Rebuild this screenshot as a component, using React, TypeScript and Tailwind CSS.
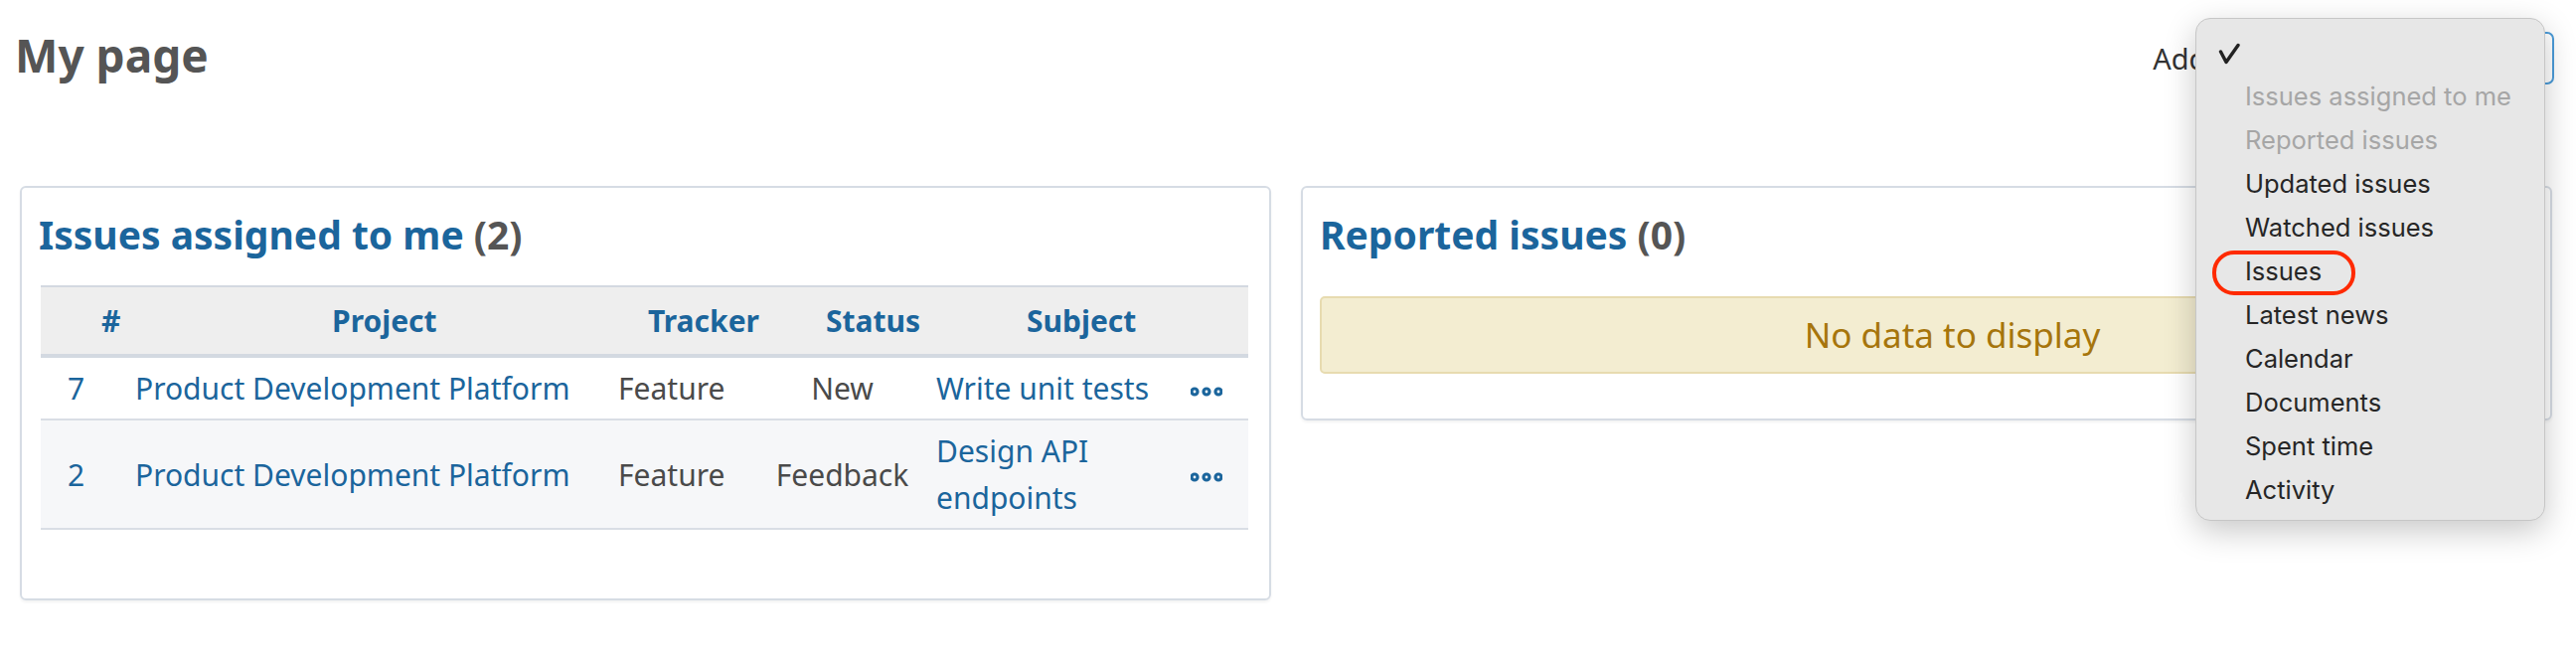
import React from "react";

function Dots() {
  return (
    <svg width="32" height="10" viewBox="0 0 32 10" className="inline-block align-middle">
      <circle cx="4" cy="5" r="3" fill="none" stroke="#1b659c" strokeWidth="3.2" />
      <circle cx="16" cy="5" r="3" fill="none" stroke="#1b659c" strokeWidth="3.2" />
      <circle cx="28" cy="5" r="3" fill="none" stroke="#1b659c" strokeWidth="3.2" />
    </svg>
  );
}

const menuItems: { label: string; disabled?: boolean }[] = [
  { label: "Issues assigned to me", disabled: true },
  { label: "Reported issues", disabled: true },
  { label: "Updated issues" },
  { label: "Watched issues" },
  { label: "Issues" },
  { label: "Latest news" },
  { label: "Calendar" },
  { label: "Documents" },
  { label: "Spent time" },
  { label: "Activity" },
];

export default function App() {
  return (
    <div className="relative w-[2592px] h-[672px] overflow-hidden bg-white font-['Noto_Sans',sans-serif]">
      {/* top row */}
      <div className="flex items-start justify-between pl-[20px] pr-[22px] pt-[25px]">
        <h2 className="-ml-[5px] text-[46px] leading-[60px] font-bold text-[#555555]">My page</h2>
        <div className="mt-[7px] flex items-center gap-[12px]">
          <span className="text-[29px] leading-[40px] text-[#333333]">Add block:</span>
          <div className="h-[53px] w-[250px] rounded-[7px] border-2 border-[#4b9bd8] bg-white" />
        </div>
      </div>

      {/* boxes */}
      <div className="mt-[102px] flex items-start gap-[30px] pl-[20px] pr-[24px]">
        <div className="flex-1 rounded-[6px] border-2 border-[#d6dce4] px-[17px] pt-[21px] shadow-[0_2px_3px_rgba(0,0,0,0.05)]">
          <h3 className="text-[39px] leading-[52px] font-bold text-[#1b659c]">
            Issues assigned to me <span className="text-[#555555]">(2)</span>
          </h3>
          <div className="mt-[25px] mb-[69px] ml-[2px] mr-[4px]">
            <table className="w-full table-fixed border-collapse text-[30px] leading-[47px]">
              <colgroup>
                <col className="w-[80px]" />
                <col className="w-[491px]" />
                <col className="w-[158px]" />
                <col className="w-[155px]" />
                <col className="w-[255px]" />
                <col className="w-[76px]" />
              </colgroup>
              <thead>
                <tr className="bg-[#eeeeee] text-left font-bold text-[#1b659c]">
                  <th className="border-t-2 border-b-4 border-[#d3d9e1] py-[10px] pl-[61px] whitespace-nowrap">#</th>
                  <th className="border-t-2 border-b-4 border-[#d3d9e1] py-[10px] pl-[213px] whitespace-nowrap">Project</th>
                  <th className="border-t-2 border-b-4 border-[#d3d9e1] py-[10px] pl-[40px] whitespace-nowrap">Tracker</th>
                  <th className="border-t-2 border-b-4 border-[#d3d9e1] py-[10px] pl-[61px] whitespace-nowrap">Status</th>
                  <th className="border-t-2 border-b-4 border-[#d3d9e1] py-[10px] pl-[108px] whitespace-nowrap">Subject</th>
                  <th className="border-t-2 border-b-4 border-[#d3d9e1] py-[10px]"></th>
                </tr>
              </thead>
              <tbody>
                <tr className="bg-white">
                  <td className="border-b-2 border-[#d9dee5] py-[7px] pl-[27px] text-[#1b659c]">7</td>
                  <td className="border-b-2 border-[#d9dee5] py-[7px] pl-[15px] text-[#1b659c] whitespace-nowrap">Product Development Platform</td>
                  <td className="border-b-2 border-[#d9dee5] py-[7px] pl-[10px] text-[#4a4a4a]">Feature</td>
                  <td className="border-b-2 border-[#d9dee5] py-[7px] text-center text-[#4a4a4a]">New</td>
                  <td className="border-b-2 border-[#d9dee5] py-[7px] pl-[17px] pr-[6px] text-[#1b659c] whitespace-nowrap">Write unit tests</td>
                  <td className="border-b-2 border-[#d9dee5] py-[7px] pl-[18px]"><Dots /></td>
                </tr>
                <tr className="bg-[#f6f7f9]">
                  <td className="border-b-2 border-[#d9dee5] py-[7px] pl-[27px] text-[#1b659c]">2</td>
                  <td className="border-b-2 border-[#d9dee5] py-[7px] pl-[15px] text-[#1b659c] whitespace-nowrap">Product Development Platform</td>
                  <td className="border-b-2 border-[#d9dee5] py-[7px] pl-[10px] text-[#4a4a4a]">Feature</td>
                  <td className="border-b-2 border-[#d9dee5] py-[7px] text-center text-[#4a4a4a]">Feedback</td>
                  <td className="border-b-2 border-[#d9dee5] py-[7px] pl-[17px] pr-[6px] text-[#1b659c]">Design API<br />endpoints</td>
                  <td className="border-b-2 border-[#d9dee5] py-[7px] pl-[18px]"><Dots /></td>
                </tr>
              </tbody>
            </table>
          </div>
        </div>

        <div className="flex-1 rounded-[6px] border-2 border-[#d6dce4] px-[17px] pt-[21px] shadow-[0_2px_3px_rgba(0,0,0,0.05)]">
          <h3 className="text-[39px] leading-[52px] font-bold text-[#1b659c]">
            Reported issues <span className="text-[#555555]">(0)</span>
          </h3>
          <div className="mt-[36px] mb-[45px] flex h-[78px] items-center justify-center rounded-[5px] border-2 border-[#e7dbb0] bg-[#f3edd1] pl-[60px] pr-[8px] text-[35px] text-[#a6750c]">
            No data to display
          </div>
        </div>
      </div>

      {/* native select dropdown menu */}
      <div className="absolute left-[2209px] top-[18px] h-[506px] w-[352px] rounded-[15px] border border-[#c6c6c6] bg-[#e7e7e7] pt-[12px] font-['Inter',sans-serif] text-[25.5px] shadow-[0_10px_32px_rgba(0,0,0,0.22)]">
        <div className="relative h-[44px] leading-[44px] pl-[49px]">
          <svg width="22" height="22" viewBox="0 0 22 22" className="absolute left-[22px] top-[12px]">
            <path d="M2.5 9 L8 19.5 L20 2.5" fill="none" stroke="#222222" strokeWidth="3.4" strokeLinecap="round" strokeLinejoin="round" />
          </svg>
        </div>
        {menuItems.map((m) => (
          <div
            key={m.label}
            className={
              m.disabled
                ? "h-[44px] leading-[44px] pl-[49px] text-[#a6a6a6] whitespace-nowrap"
                : "h-[44px] leading-[44px] pl-[49px] text-[#262626] whitespace-nowrap"
            }
          >
            {m.label}
          </div>
        ))}
        <div className="absolute left-[16px] top-[233px] h-[45px] w-[144px] rounded-[22px] border-4 border-[#ff2a00]" />
      </div>
    </div>
  );
}
